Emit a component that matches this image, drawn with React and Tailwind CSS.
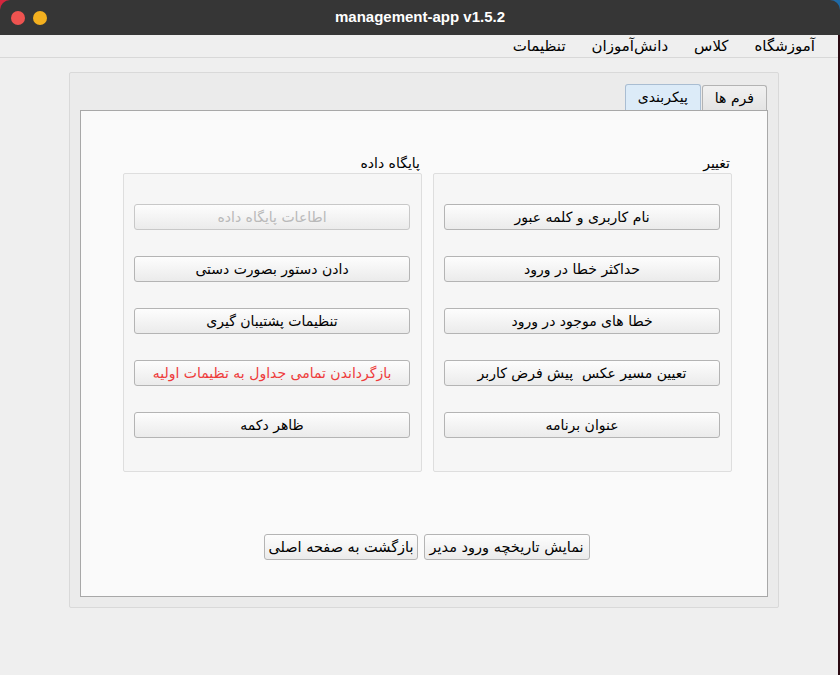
import React from "react";

const rightButtons = [
  { label: "نام کاربری و کلمه عبور" },
  { label: "حداکثر خطا در ورود" },
  { label: "خطا های موجود در ورود" },
  { label: "تعیین مسیر عکس  پیش فرض کاربر" },
  { label: "عنوان برنامه" },
];

const leftButtons = [
  { label: "اطاعات پایگاه داده", disabled: true },
  { label: "دادن دستور بصورت دستی" },
  { label: "تنظیمات پشتیبان گیری" },
  { label: "بازگرداندن تمامی جداول به تظیمات اولیه", danger: true },
  { label: "ظاهر دکمه" },
];

const QtButton = ({ label, disabled, danger, className = "" }) => (
  <button
    dir="rtl"
    className={
      "h-[26px] rounded-[3px] border border-[#b4b4b4] bg-gradient-to-b from-[#fdfdfd] to-[#ebebeb] leading-none whitespace-pre " +
      (disabled
        ? "text-[#b9b9b9] border-[#c8c8c8]"
        : danger
        ? "text-[#ee3b3b]"
        : "text-black") +
      " " +
      className
    }
  >
    {label}
  </button>
);

const Group = ({ title, items }) => (
  <div className="flex w-[299px] flex-col">
    <div dir="rtl" className="h-[18px] pr-[2px] text-[14px] leading-[16px] text-black">
      {title}
    </div>
    <div className="flex h-[299px] flex-col gap-[26px] rounded-[2px] border border-[#dedede] bg-[#f6f6f6] pl-[10px] pr-[11px] pt-[30px]">
      {items.map((b, i) => (
        <QtButton key={i} {...b} className="w-full text-[14px]" />
      ))}
    </div>
  </div>
);

export default function App() {
  return (
    <div
      className="relative h-[675px] w-[840px] overflow-hidden bg-[#efefef]"
      style={{ fontFamily: '"DejaVu Sans", sans-serif' }}
    >
      {/* Title bar */}
      <div className="bg-gradient-to-r from-[#d4263d] via-[#a73a5e] to-[#1c6aa6]">
        <div className="relative flex h-[35px] items-center rounded-t-[10px] bg-[#363636]">
          <div className="ml-[11px] flex gap-[8px]">
            <span className="h-[14px] w-[14px] rounded-full bg-[#ee5350]" />
            <span className="h-[14px] w-[14px] rounded-full bg-[#f3b01f]" />
          </div>
          <div
            className="absolute left-0 right-0 top-0 flex h-[35px] items-center justify-center text-[15px] font-bold text-white"
            style={{ fontFamily: '"Liberation Sans", sans-serif' }}
          >
            management-app v1.5.2
          </div>
        </div>
      </div>

      {/* Menu bar */}
      <div
        dir="rtl"
        className="flex h-[23px] items-center gap-[26px] border-b border-[#d8d8d8] bg-[#efefef] pr-[25px] text-[15px] text-black"
      >
        <span>آموزشگاه</span>
        <span>کلاس</span>
        <span>دانش‌آموزان</span>
        <span>تنظیمات</span>
      </div>

      {/* Content */}
      <div className="pl-[69px] pt-[14px]">
        <div className="flex h-[536px] w-[710px] flex-col rounded-[2px] border border-[#d9d9d9] bg-[#ebebeb] px-[10px] pt-[11px]">
          {/* Tabs */}
          <div dir="rtl" className="flex items-end pr-[1px]">
            <div className="flex h-[25px] items-center rounded-t-[3px] border border-b-0 border-[#b3b3b3] bg-gradient-to-b from-[#f1f1f1] to-[#e4e4e4] px-[12px] text-[14px] text-black">
              فرم ها
            </div>
            <div className="mr-[1px] flex h-[26px] items-center rounded-t-[3px] border border-b-0 border-[#a9bdd2] bg-[#dcebf8] px-[12px] text-[14px] text-black">
              پیکربندی
            </div>
          </div>
          {/* Pane */}
          <div className="flex h-[487px] w-[688px] flex-col border border-[#a8a8a8] bg-[#fafafa]">
            <div className="mt-[44px] flex gap-[11px] pl-[42px]">
              <Group title="پایگاه داده" items={leftButtons} />
              <Group title="تغییر" items={rightButtons} />
            </div>
            <div className="mt-[62px] flex justify-center gap-[6px] pl-[6px]">
              <QtButton label="بازگشت به صفحه اصلی" className="px-[3px] text-[14.5px]" />
              <QtButton label="نمایش تاریخچه ورود مدیر" className="px-[5px] text-[14.5px]" />
            </div>
          </div>
        </div>
      </div>

      {/* Window edge */}
      <div className="absolute bottom-0 right-0 top-[35px] w-[2px] bg-[#2a0a12]" />
    </div>
  );
}
